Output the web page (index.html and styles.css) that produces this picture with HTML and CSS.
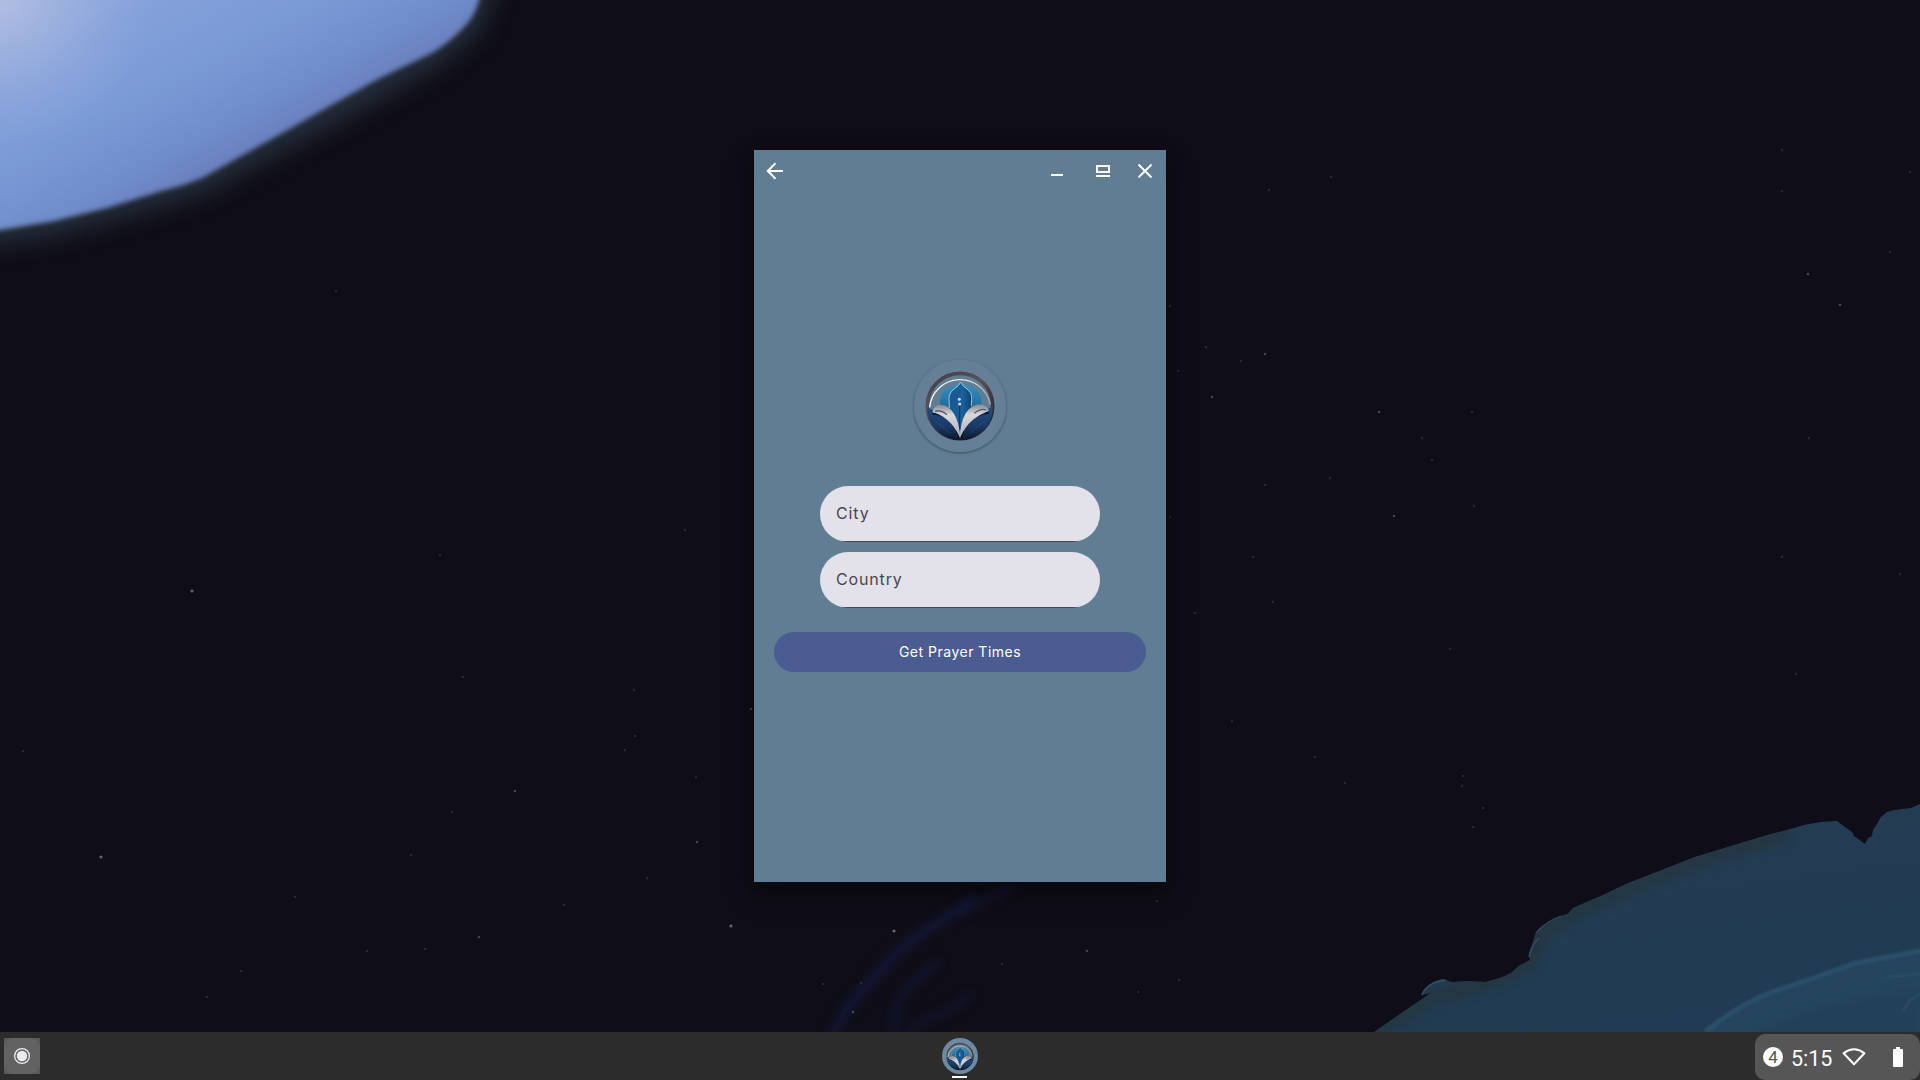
FILE: index.html
```html
<!DOCTYPE html>
<html lang="en">
<head>
<meta charset="utf-8">
<title>Prayer Times</title>
<link rel="stylesheet" href="styles.css">
</head>
<body>
<svg class="wallpaper" viewBox="0 0 1920 1080" aria-hidden="true">
  <defs>
    <linearGradient id="planet" gradientUnits="userSpaceOnUse" x1="0" y1="0" x2="120" y2="222">
      <stop offset="0" stop-color="#98addf"/>
      <stop offset=".3" stop-color="#84a0da"/>
      <stop offset=".6" stop-color="#7a9ad6"/>
      <stop offset=".85" stop-color="#708dcb"/>
      <stop offset="1" stop-color="#6a80bf"/>
    </linearGradient>
    <radialGradient id="glow" gradientUnits="userSpaceOnUse" cx="0" cy="0" r="150">
      <stop offset="0" stop-color="#b8c3e2" stop-opacity=".75"/>
      <stop offset="1" stop-color="#9db3e0" stop-opacity="0"/>
    </radialGradient>
    <linearGradient id="sea" x1="0" y1="0" x2=".3" y2="1">
      <stop offset="0" stop-color="#253d52"/>
      <stop offset="1" stop-color="#213b54"/>
    </linearGradient>
    <filter id="b1" x="-10%" y="-10%" width="120%" height="120%" color-interpolation-filters="sRGB"><feGaussianBlur stdDeviation="2.6"/></filter>
    <filter id="b2" x="-20%" y="-20%" width="140%" height="140%" color-interpolation-filters="sRGB"><feGaussianBlur stdDeviation="11"/></filter>
    <filter id="b3" x="-20%" y="-20%" width="140%" height="140%" color-interpolation-filters="sRGB"><feGaussianBlur stdDeviation="4"/></filter>
    <filter id="b4" color-interpolation-filters="sRGB"><feGaussianBlur stdDeviation="1.3"/></filter>
    <clipPath id="land"><path d="M1374 1032L1403 1012L1431 993L1421 995Q1426 983 1442 979L1452 982L1468 981L1485 982Q1500 979 1511 973L1519 966L1530 960L1529 953L1533 942L1536 932Q1545 923 1561 916L1568 914L1573 908L1589 901L1603 895L1626 884L1649 875L1672 866L1695 857L1718 850L1741 843L1764 836L1787 830L1804 825L1821 822L1837 821L1845 827L1852 832L1854 836L1865 844L1868 838L1872 836L1873 830L1877 824L1881 817L1887 812L1894 810L1903 809L1911 808L1920 804V1032Z"/></clipPath>
  </defs>
  <rect width="1920" height="1080" fill="#0f0e18"/>
  <path filter="url(#b2)" fill="#26303d" opacity=".9" d="M-40-40H504L482 28L444 62L388 94L337 123L250 168L206 193L161 206L107 222L54 236L-40 250Z"/>
  <g filter="url(#b1)">
    <path fill="url(#planet)" d="M-40-40H492L479 0Q474 18 464 27Q450 42 432 53Q405 66 378 79L328 107L286 131L250 151L204 177Q184 186 161 191L107 208L54 221L0 230L-40 236Z"/>
    <path fill="url(#glow)" d="M-40-40H200V170H-40Z"/>
  </g>
  <g clip-path="url(#land)">
    <rect x="1360" y="790" width="560" height="250" fill="url(#sea)"/>
    <path d="M1374 1034L1431 998L1485 984L1530 963L1540 932L1603 899L1695 861L1787 833" fill="none" stroke="#253640" stroke-width="16" opacity=".85" filter="url(#b3)"/>
    <path d="M1705 1034Q1740 1004 1772 992L1814 978L1856 963L1920 951V1040Z" fill="#24455d"/>
    <path d="M1745 1040Q1800 1004 1920 990V1040Z" fill="#234059" filter="url(#b3)"/>
    <path d="M1705 1032Q1740 1004 1772 992L1814 978L1856 963L1925 950" fill="none" stroke="#2b5069" stroke-width="5" filter="url(#b4)"/>
    <path d="M1880 978L1925 973M1903 1012Q1908 998 1925 992" fill="none" stroke="#2b5069" stroke-width="2" filter="url(#b4)"/>
  </g>
  <path d="M1422 995Q1427 982 1446 980M1529 957Q1532 944 1539 938M1537 932Q1546 921 1561 916" fill="none" stroke="#3a6078" stroke-width="1.3" opacity=".65"/>
  <g fill="none" stroke="#161b46" filter="url(#b3)" stroke-linecap="round" stroke-linejoin="round">
    <path d="M833 1034Q842 1020 847 1008Q855 998 863 990L893 957Q910 940 927 930L973 900" stroke-width="8" opacity=".75"/>
    <path d="M960 913Q985 899 1012 887" stroke-width="7" opacity=".5"/>
    <path d="M892 1034Q896 1015 897 1007Q900 995 912 984L937 963" stroke-width="5" opacity=".7"/>
    <path d="M905 1034L920 1023L948 1012L970 995" stroke-width="5" opacity=".45"/>
  </g>
  <g class="stars">
    <path class="bright" d="M731 926h0M894 931h0M192 591h0M101 857h0"/>
    <path class="medium" d="M853 1012h0M1265 354h0M1840 305h0M751 709h0M697 842h0M479 937h0M1379 412h0M1394 516h0M1808 274h0M1212 397h0M1087 951h0M515 791h0"/>
    <path class="faint" d="M1206 347h0M1241 361h0M1178 371h0M1170 306h0M1472 412h0M1330 478h0M1265 485h0M1474 506h0M1422 438h0M1432 460h0M1253 557h0M1273 602h0M1195 613h0M1450 649h0M1782 557h0M1890 252h0M1782 150h0M1782 191h0M1910 172h0M1809 438h0M1796 674h0M1315 757h0M1345 783h0M1232 721h0M1170 517h0M1900 574h0M1463 776h0M1331 177h0M1269 190h0M634 690h0M463 677h0M635 736h0M625 750h0M696 777h0M295 897h0M564 905h0M425 949h0M367 951h0M241 971h0M207 997h0M336 291h0M440 555h0M685 530h0M452 812h0M411 855h0M647 878h0M23 751h0M1157 901h0M1179 980h0M1138 992h0M1002 964h0M823 984h0M861 983h0M1483 808h0M1473 827h0M1462 786h0"/>
  </g>
</svg>

<svg class="defs" aria-hidden="true">
  <defs>
    <linearGradient id="ring" x1="0" y1="0" x2=".5" y2="1"><stop offset="0" stop-color="#3b3d49"/><stop offset=".4" stop-color="#5a5058"/><stop offset="1" stop-color="#211f2b"/></linearGradient>
    <linearGradient id="rim" x1="0" y1="0" x2="1" y2="0"><stop offset="0" stop-color="#f4f6f8"/><stop offset=".6" stop-color="#e6e4e6"/><stop offset="1" stop-color="#a9a5ac"/></linearGradient>
    <linearGradient id="dome" x1="0" y1="0" x2="1" y2="0"><stop offset="0" stop-color="#17588f"/><stop offset=".6" stop-color="#1a6099"/><stop offset="1" stop-color="#0c4270"/></linearGradient>
    <linearGradient id="side" x1="0" y1="0" x2="0" y2="1"><stop offset="0" stop-color="#3993c2"/><stop offset=".6" stop-color="#17659b"/><stop offset="1" stop-color="#0c3c66"/></linearGradient>
    <linearGradient id="base" x1="0" y1="0" x2="0" y2="1"><stop offset="0" stop-color="#224f80"/><stop offset=".6" stop-color="#1a3966"/><stop offset="1" stop-color="#0e1830"/></linearGradient>
    <linearGradient id="leaf" x1="0" y1="0" x2="0" y2="1"><stop offset="0" stop-color="#85868f"/><stop offset=".3" stop-color="#d8d8dc"/><stop offset="1" stop-color="#b0b2bc"/></linearGradient>
    <symbol id="emblem" viewBox="0 0 210 216">
      <circle cx="105" cy="108" r="98" fill="#617d94" stroke="url(#ring)" stroke-width="11"/>
      <path d="M14 112A92 92 0 0 1 196 104" fill="none" stroke="url(#rim)" stroke-width="4"/>
      <path d="M107 38Q84 46 66 54Q46 68 45 90L46 125L105 180L167 125L169 92Q168 68 150 56Q128 46 107 38Z" fill="url(#side)"/>
      <path d="M107 34Q101 50 86 58Q72 68 72 86L75 118L105 178L138 120L141 84Q140 68 127 58Q112 48 107 34Z" fill="url(#dome)"/>
      <path d="M73 114L72 86Q73 66 88 57Q102 48 107 36Q112 48 126 57Q141 68 140 86L139 108" fill="none" stroke="#c3d3e0" stroke-width="2.5"/>
      <path d="M104 100V185" stroke="#0d3158" stroke-width="3"/>
      <circle cx="103" cy="88" r="4.5" fill="#cfdce8"/><circle cx="104" cy="102" r="4.5" fill="#cfdce8"/>
      <path d="M7 112Q20 118 34 127L70 140L105 208L140 140L176 127Q190 116 203 108Q205 160 165 190Q138 210 105 210Q72 210 45 190Q8 160 7 112Z" fill="url(#base)"/>
      <path d="M22 130Q50 130 76 152Q96 172 102 206M192 128Q160 130 134 152Q114 172 108 206" fill="none" stroke="#0a1429" stroke-width="7"/>
      <path d="M22 127Q26 106 46 104Q70 104 86 130Q104 158 105 204Q90 168 64 148Q44 132 22 127Z" fill="url(#leaf)"/>
      <path d="M192 122Q182 103 160 103Q136 108 122 130Q105 160 105 204Q120 168 146 148Q166 132 192 122Z" fill="url(#leaf)"/>
      <path d="M30 124Q46 118 66 134M184 120Q168 114 148 130" fill="none" stroke="#555a69" stroke-width="4"/>
      <path d="M26 154Q50 162 74 190M184 154Q160 162 136 190" fill="none" stroke="#2a5f96" stroke-width="2" opacity=".6"/>
    </symbol>
  </defs>
</svg>

<div class="desktop">
  <main class="stage">
    <section class="window">
      <header class="titlebar">
        <svg class="back" viewBox="0 0 18 18"><path d="M17 9H2M9.5 1.3L1.8 9L9.5 16.7"/></svg>
        <svg class="minimize" viewBox="0 0 12 2"><path d="M0 1H12"/></svg>
        <svg class="maximize" viewBox="0 0 14 12"><path d="M1 1H13V7H1ZM0 11H14"/></svg>
        <svg class="close" viewBox="0 0 14 14"><path d="M.5 .5L13.5 13.5M13.5 .5L.5 13.5"/></svg>
      </header>
      <div class="content">
        <div class="badge"><svg class="logo"><use href="#emblem"/></svg></div>
        <div class="fields">
          <div class="field">City</div>
          <div class="field">Country</div>
        </div>
        <button class="submit" type="button">Get Prayer Times</button>
      </div>
    </section>
  </main>
  <footer class="taskbar">
    <div class="launcher"><svg viewBox="0 0 36 36"><rect width="36" height="36" rx="9" fill="#626262"/><circle cx="18" cy="18" r="7.4" fill="none" stroke="#e8eaed" stroke-width="1.3"/><circle cx="18" cy="18" r="5.2" fill="#e8eaed"/></svg></div>
    <div class="app">
      <div class="app-icon"><svg><use href="#emblem"/></svg></div>
      <div class="running"></div>
    </div>
    <div class="status">
      <span class="count">4</span>
      <span class="clock">5:15</span>
      <svg class="wifi" viewBox="0 0 24 18"><path d="M1.6 5.2Q12-2.6 22.4 5.2L12 16.2Z"/></svg>
      <svg class="battery" viewBox="0 0 10 20"><path d="M3 0H7V2H9Q10 2 10 3V19Q10 20 9 20H1Q0 20 0 19V3Q0 2 1 2H3Z"/></svg>
    </div>
  </footer>
</div>
</body>
</html>
```
FILE: styles.css
```css
* { box-sizing: border-box; }
body { margin: 0; width: 1920px; height: 1080px; overflow: hidden; background: #0f0e18; font-family: Inter, "Noto Sans", sans-serif; }
svg { display: block; }
.wallpaper { position: absolute; inset: 0; width: 1920px; height: 1080px; }
.stars path { fill: none; stroke: #8b8a90; stroke-linecap: round; }
.stars .bright { stroke-width: 3.2px; opacity: .7; }
.stars .medium { stroke-width: 2.6px; opacity: .45; }
.stars .faint { stroke-width: 2.4px; opacity: .22; }
.defs { position: absolute; width: 0; height: 0; }
.desktop { position: relative; height: 1080px; display: flex; flex-direction: column; }
.stage { flex: 1; display: flex; justify-content: center; align-items: center; }
.window { width: 412px; height: 732px; background: #617d94; box-shadow: 0 12px 24px rgba(0,0,0,.4), 0 0 12px rgba(0,0,0,.2); display: flex; flex-direction: column; }
.titlebar { height: 42px; display: flex; align-items: center; padding: 0 14px 0 12px; }
.titlebar path { fill: none; stroke: #fff; stroke-width: 2; }
.back { width: 18px; height: 18px; margin-right: auto; }
.minimize { width: 12px; height: 2px; margin: 8px 33px 0 0; }
.maximize { width: 14px; height: 12px; margin-right: 28px; }
.close { width: 14px; height: 14px; }
.content { flex: 1; display: flex; flex-direction: column; align-items: center; padding: 168px 20px 0; }
.badge { width: 92px; height: 92px; border-radius: 50%; background: #647f96; box-shadow: 0 1px 3px rgba(20,35,50,.55), 0 0 1px rgba(160,190,210,.5); display: flex; align-items: center; justify-content: center; }
.logo { width: 70px; height: 72px; }
.fields { width: 280px; margin-top: 34px; display: flex; flex-direction: column; gap: 10px; }
.field { height: 56px; border-radius: 28px; background: linear-gradient(#46464f, #46464f) 0 100% / 100% 1px no-repeat #e3e1e9; display: flex; align-items: center; padding: 0 16px 2px; color: #46464f; font-size: 16px; line-height: 24px; letter-spacing: .85px; }
.submit { width: 372px; height: 40px; margin-top: 24px; padding: 0; border: 0; border-radius: 20px; background: #4a5c92; color: #fff; font: 400 14px/20px Inter, "Noto Sans", sans-serif; letter-spacing: .5px; }
.taskbar { height: 48px; background: #2c2c2c; display: grid; grid-template-columns: 1fr 36px 1fr; }
.launcher { width: 36px; height: 36px; margin: 6px 0 0 4px; background: #585858; }
.app { display: flex; flex-direction: column; align-items: center; padding-top: 6px; }
.app-icon { width: 36px; height: 36px; border-radius: 50%; background: #6d8aa2; display: flex; align-items: center; justify-content: center; }
.app-icon svg { width: 28px; height: 29px; }
.running { width: 15px; height: 2px; margin: 2px 1px 0 0; background: #fff; }
.status { justify-self: end; width: 165px; height: 46px; margin-top: 2px; border-radius: 10px; background: #565656; color: #fff; display: flex; align-items: center; padding-left: 8px; font-family: Roboto, sans-serif; }
.count { width: 20px; height: 20px; border-radius: 50%; background: #fff; color: #565656; font-size: 17px; line-height: 21px; text-align: center; }
.clock { width: 42px; margin-left: 8px; font-size: 21.5px; line-height: 26px; padding-top: 3px; }
.wifi { width: 24px; height: 18px; margin-left: 9px; }
.wifi path { fill: none; stroke: #fff; stroke-width: 2; stroke-linejoin: round; }
.battery { width: 10px; height: 20px; margin-left: 27px; fill: #fff; }
```
